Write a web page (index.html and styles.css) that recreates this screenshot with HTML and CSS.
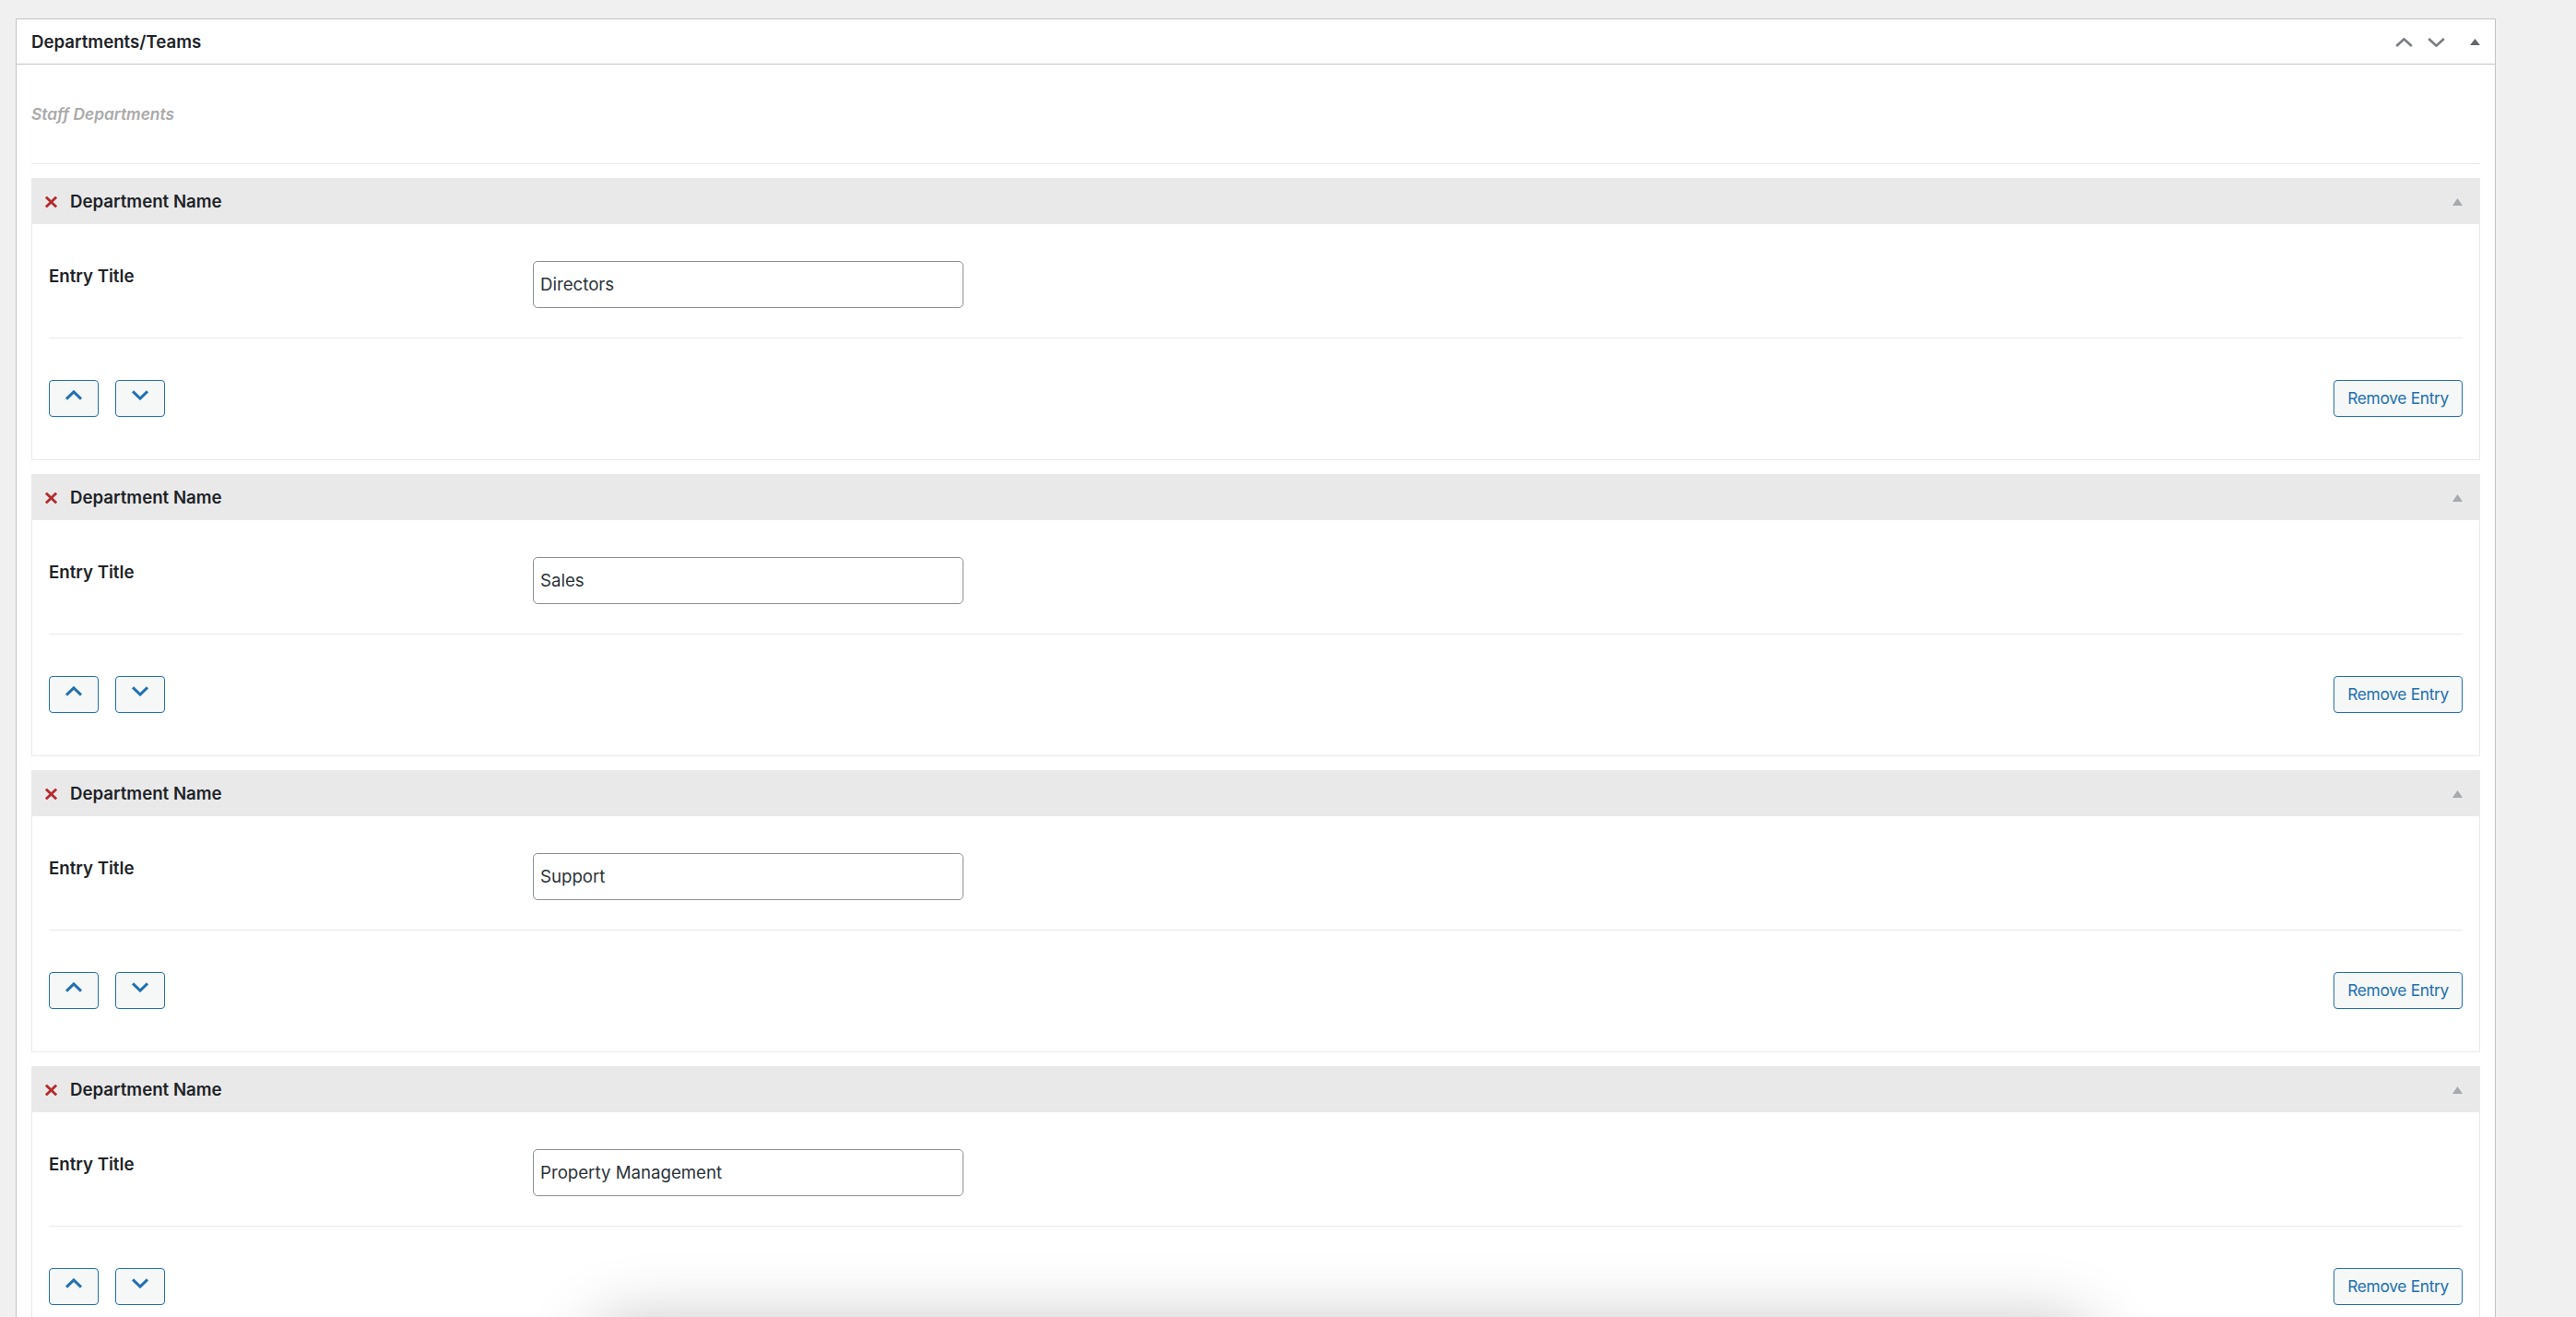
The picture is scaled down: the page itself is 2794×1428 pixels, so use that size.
FILE: index.html
```html
<!DOCTYPE html>
<html lang="en">
<head>
<meta charset="utf-8">
<title>Departments/Teams</title>
<link rel="stylesheet" href="styles.css">
</head>
<body>
<div class="postbox">
  <div class="postbox-header">
    <h2 class="postbox-title">Departments/Teams</h2>
    <div class="handle-actions">
      <span class="handle handle-up"><svg width="19" height="10" viewBox="0 0 19 10"><path d="M1.2 9 L9.5 1.4 L17.8 9"/></svg></span>
      <span class="handle handle-down"><svg width="19" height="10" viewBox="0 0 19 10"><path d="M1.2 1 L9.5 8.6 L17.8 1"/></svg></span>
      <span class="handle handle-toggle"><svg width="11" height="7" viewBox="0 0 11 7"><polygon points="5.5,0 11,7 0,7"/></svg></span>
    </div>
  </div>
  <div class="inside">
    <div class="group-desc"><p>Staff Departments</p></div>
    <div class="group-list">

      <div class="grouping">
        <div class="group-title">
          <span class="remove-x"><svg width="13" height="12" viewBox="0 0 13 12"><path d="M0.9 0.6 L12.1 11.4 M12.1 0.6 L0.9 11.4"/></svg></span>
          <h3>Department Name</h3>
          <span class="toggle-tri"><svg width="11" height="8" viewBox="0 0 11 8"><polygon points="5.5,0 11,8 0,8"/></svg></span>
        </div>
        <div class="group-body">
          <div class="field-row">
            <label class="field-label">Entry Title</label>
            <div class="field"><input class="text-input" type="text" value="Directors"></div>
          </div>
          <div class="actions-row">
            <div class="shift">
              <button class="btn btn-icon" type="button"><svg width="18" height="11" viewBox="0 0 18 11"><path d="M1 9.6 L9 1.9 L17 9.6"/></svg></button>
              <button class="btn btn-icon" type="button"><svg width="18" height="11" viewBox="0 0 18 11"><path d="M1 1.4 L9 9.1 L17 1.4"/></svg></button>
            </div>
            <button class="btn btn-remove" type="button">Remove Entry</button>
          </div>
        </div>
      </div>

      <div class="grouping">
        <div class="group-title">
          <span class="remove-x"><svg width="13" height="12" viewBox="0 0 13 12"><path d="M0.9 0.6 L12.1 11.4 M12.1 0.6 L0.9 11.4"/></svg></span>
          <h3>Department Name</h3>
          <span class="toggle-tri"><svg width="11" height="8" viewBox="0 0 11 8"><polygon points="5.5,0 11,8 0,8"/></svg></span>
        </div>
        <div class="group-body">
          <div class="field-row">
            <label class="field-label">Entry Title</label>
            <div class="field"><input class="text-input" type="text" value="Sales"></div>
          </div>
          <div class="actions-row">
            <div class="shift">
              <button class="btn btn-icon" type="button"><svg width="18" height="11" viewBox="0 0 18 11"><path d="M1 9.6 L9 1.9 L17 9.6"/></svg></button>
              <button class="btn btn-icon" type="button"><svg width="18" height="11" viewBox="0 0 18 11"><path d="M1 1.4 L9 9.1 L17 1.4"/></svg></button>
            </div>
            <button class="btn btn-remove" type="button">Remove Entry</button>
          </div>
        </div>
      </div>

      <div class="grouping">
        <div class="group-title">
          <span class="remove-x"><svg width="13" height="12" viewBox="0 0 13 12"><path d="M0.9 0.6 L12.1 11.4 M12.1 0.6 L0.9 11.4"/></svg></span>
          <h3>Department Name</h3>
          <span class="toggle-tri"><svg width="11" height="8" viewBox="0 0 11 8"><polygon points="5.5,0 11,8 0,8"/></svg></span>
        </div>
        <div class="group-body">
          <div class="field-row">
            <label class="field-label">Entry Title</label>
            <div class="field"><input class="text-input" type="text" value="Support"></div>
          </div>
          <div class="actions-row">
            <div class="shift">
              <button class="btn btn-icon" type="button"><svg width="18" height="11" viewBox="0 0 18 11"><path d="M1 9.6 L9 1.9 L17 9.6"/></svg></button>
              <button class="btn btn-icon" type="button"><svg width="18" height="11" viewBox="0 0 18 11"><path d="M1 1.4 L9 9.1 L17 1.4"/></svg></button>
            </div>
            <button class="btn btn-remove" type="button">Remove Entry</button>
          </div>
        </div>
      </div>

      <div class="grouping">
        <div class="group-title">
          <span class="remove-x"><svg width="13" height="12" viewBox="0 0 13 12"><path d="M0.9 0.6 L12.1 11.4 M12.1 0.6 L0.9 11.4"/></svg></span>
          <h3>Department Name</h3>
          <span class="toggle-tri"><svg width="11" height="8" viewBox="0 0 11 8"><polygon points="5.5,0 11,8 0,8"/></svg></span>
        </div>
        <div class="group-body">
          <div class="field-row">
            <label class="field-label">Entry Title</label>
            <div class="field"><input class="text-input" type="text" value="Property Management"></div>
          </div>
          <div class="actions-row">
            <div class="shift">
              <button class="btn btn-icon" type="button"><svg width="18" height="11" viewBox="0 0 18 11"><path d="M1 9.6 L9 1.9 L17 9.6"/></svg></button>
              <button class="btn btn-icon" type="button"><svg width="18" height="11" viewBox="0 0 18 11"><path d="M1 1.4 L9 9.1 L17 1.4"/></svg></button>
            </div>
            <button class="btn btn-remove" type="button">Remove Entry</button>
          </div>
        </div>
      </div>

    </div>
  </div>
</div>
<div class="floating-shadow"></div>
</body>
</html>
```

FILE: styles.css
```css
* {
  box-sizing: border-box;
}

html,
body {
  margin: 0;
}

body {
  background: #f0f0f0;
  font-family: Inter, "Noto Sans", Roboto, sans-serif;
  color: #1d2327;
  padding: 20px 0 0 17px;
}

.postbox {
  width: 2690px;
  background: #fff;
  border: 1px solid #c3c4c7;
  border-bottom: 0;
}

.postbox-header {
  height: 49px;
  border-bottom: 1px solid #c3c4c7;
  display: flex;
  align-items: center;
  padding: 1px 16px 0 16px;
}

.postbox-title {
  margin: 0;
  font-size: 18.67px;
  font-weight: 600;
  line-height: 26px;
  color: #1d2327;
}

.handle-actions {
  margin-left: auto;
  display: flex;
  align-items: center;
}

.handle {
  display: flex;
}

.handle svg path {
  fill: none;
  stroke: #787c82;
  stroke-width: 2.6;
}

.handle-down {
  margin-left: 16px;
}

.handle-toggle {
  margin-left: 27px;
}

.handle-toggle svg polygon {
  fill: #646970;
}

.inside {
  padding: 0 16px 60px;
}

.group-desc {
  padding: 42px 0 41px;
  border-bottom: 1px solid #e9e9e9;
}

.group-desc p {
  margin: 0;
  font-size: 17.33px;
  line-height: 24px;
  font-style: italic;
  font-weight: 600;
  color: #aaa;
}

.group-list {
  padding-top: 15px;
}

.grouping {
  border: 1px solid #e9e9e9;
  margin-bottom: 15px;
}

.group-title {
  height: 49px;
  background: #e9e9e9;
  display: flex;
  align-items: center;
  padding: 0 18px 0 14px;
}

.remove-x {
  display: flex;
  margin-right: 14px;
}

.remove-x svg path {
  fill: none;
  stroke: #b32d2e;
  stroke-width: 2.8;
}

.group-title h3 {
  margin: 0;
  font-size: 18.67px;
  line-height: 26px;
  font-weight: 600;
  color: #1d2327;
}

.toggle-tri {
  margin-left: auto;
  display: flex;
}

.toggle-tri svg polygon {
  fill: #a7aaad;
}

.group-body {
  padding: 0 18px;
}

.field-row {
  display: grid;
  grid-template-columns: 525px 1fr;
  padding: 40px 0 32px;
  border-bottom: 1px solid #e9e9e9;
}

.field-label {
  margin-top: 5px;
  font-size: 18.67px;
  line-height: 24px;
  font-weight: 600;
  color: #1d2327;
}

.field {
  display: flex;
}

.text-input {
  width: 467px;
  height: 51px;
  border: 1px solid #8c8f94;
  border-radius: 5px;
  padding: 0 7px;
  font-family: Inter, "Noto Sans", Roboto, sans-serif;
  font-size: 18.67px;
  color: #2c3338;
  background: #fff;
  outline: none;
}

.actions-row {
  display: flex;
  align-items: center;
  justify-content: space-between;
  padding: 45px 0 46px;
}

.shift {
  display: flex;
  gap: 18px;
}

.btn {
  height: 40px;
  border: 1px solid #2271b1;
  border-radius: 4px;
  background: #f6f7f7;
  color: #2271b1;
  margin: 0;
  cursor: pointer;
}

.btn-icon {
  width: 54px;
  padding: 0 0 8px;
  display: flex;
  align-items: center;
  justify-content: center;
}

.btn-icon svg path {
  fill: none;
  stroke: #2271b1;
  stroke-width: 3;
}

.btn-remove {
  padding: 0 14px;
  font-family: Inter, "Noto Sans", Roboto, sans-serif;
  font-size: 17.33px;
  letter-spacing: -0.3px;
  line-height: 38px;
}

.floating-shadow {
  position: fixed;
  left: 636px;
  width: 1640px;
  top: calc(100% + 2px);
  height: 100px;
  border-radius: 48px;
  background: #fff;
  box-shadow: 0 0 70px rgba(0, 0, 0, 0.22);
}
```
